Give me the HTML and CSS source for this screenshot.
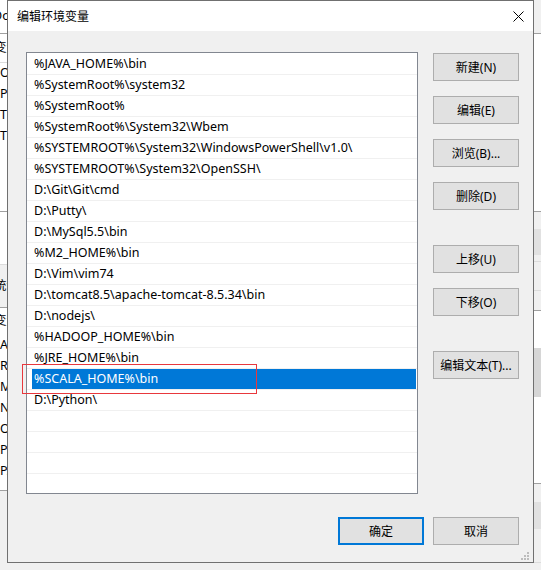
FILE: index.html
```html
<!DOCTYPE html>
<html lang="zh-CN">
<head>
<meta charset="utf-8">
<title>编辑环境变量</title>
<link rel="stylesheet" href="styles.css">
</head>
<body>
<div class="desktop">
  <div class="back back-left">
    <div class="b-row h33 white cut6">Do</div>
    <div class="b-line dark"></div>
    <div class="b-row h28 white cut5">变量</div>
    <div class="b-line light"></div>
    <div class="b-row h21 white">OneDrive</div>
    <div class="b-row h21 white">Path</div>
    <div class="b-row h21 white">TEMP</div>
    <div class="b-row h21 white">TMP</div>
    <div class="b-fill h64 white"></div>
    <div class="b-line dark"></div>
    <div class="b-fill h52 white"></div>
    <div class="b-line light"></div>
    <div class="b-row h42 cut5">统计</div>
    <div class="b-line dark"></div>
    <div class="b-row h27 white cut5">变量</div>
    <div class="b-row h21 white">ANDROID</div>
    <div class="b-row h21 white">REPO</div>
    <div class="b-row h21 white">M2_HOME</div>
    <div class="b-row h21 white">NUMBER</div>
    <div class="b-row h21 white">OS</div>
    <div class="b-row h21 white">Path</div>
    <div class="b-row h21 white">PATHEXT</div>
    <div class="b-fill h8 white"></div>
    <div class="b-line dark"></div>
  </div>
  <div class="back back-right">
    <div class="b-fill h33"></div>
    <div class="b-line dark"></div>
    <div class="b-fill h177 white"></div>
    <div class="b-line dark"></div>
    <div class="b-fill h17"></div>
    <div class="b-fill h26 block"></div>
    <div class="b-fill h6"></div>
    <div class="b-line light"></div>
    <div class="b-fill h28"></div>
    <div class="b-line light"></div>
    <div class="b-fill h19"></div>
    <div class="b-line dark"></div>
    <div class="b-fill h37 white"></div>
    <div class="b-fill h49 block2"></div>
    <div class="b-fill h86 white"></div>
    <div class="b-line dark"></div>
    <div class="b-fill h18"></div>
    <div class="b-fill h27 block"></div>
    <div class="b-fill h33"></div>
    <div class="b-line light"></div>
  </div>

  <div class="dialog">
    <div class="titlebar">
      <span class="title">编辑环境变量</span>
      <span class="close" aria-label="关闭">
        <svg width="11" height="11" viewBox="0 0 11 11"><path d="M0.5 0.5 L10.5 10.5 M10.5 0.5 L0.5 10.5" stroke="#000" stroke-width="1" fill="none"/></svg>
      </span>
    </div>
    <div class="body">
      <div class="main">
        <div class="list">
          <div class="row"><span class="item">%JAVA_HOME%\bin</span></div>
          <div class="row"><span class="item">%SystemRoot%\system32</span></div>
          <div class="row"><span class="item">%SystemRoot%</span></div>
          <div class="row"><span class="item">%SystemRoot%\System32\Wbem</span></div>
          <div class="row"><span class="item">%SYSTEMROOT%\System32\WindowsPowerShell\v1.0\</span></div>
          <div class="row"><span class="item">%SYSTEMROOT%\System32\OpenSSH\</span></div>
          <div class="row"><span class="item">D:\Git\Git\cmd</span></div>
          <div class="row"><span class="item">D:\Putty\</span></div>
          <div class="row"><span class="item">D:\MySql5.5\bin</span></div>
          <div class="row"><span class="item">%M2_HOME%\bin</span></div>
          <div class="row"><span class="item">D:\Vim\vim74</span></div>
          <div class="row"><span class="item">D:\tomcat8.5\apache-tomcat-8.5.34\bin</span></div>
          <div class="row"><span class="item">D:\nodejs\</span></div>
          <div class="row"><span class="item">%HADOOP_HOME%\bin</span></div>
          <div class="row"><span class="item">%JRE_HOME%\bin</span></div>
          <div class="row"><span class="item selected">%SCALA_HOME%\bin</span></div>
          <div class="row"><span class="item">D:\Python\</span></div>
          <div class="row"><span class="item"></span></div>
          <div class="row"><span class="item"></span></div>
          <div class="row"><span class="item"></span></div>
          <div class="row"><span class="item"></span></div>
        </div>
        <div class="side">
          <div class="btn">新建(N)</div>
          <div class="btn">编辑(E)</div>
          <div class="btn">浏览(B)...</div>
          <div class="btn">删除(D)</div>
          <div class="btn spaced">上移(U)</div>
          <div class="btn">下移(O)</div>
          <div class="btn spaced">编辑文本(T)...</div>
        </div>
      </div>
      <div class="footer">
        <div class="btn default">确定</div>
        <div class="btn">取消</div>
      </div>
    </div>
    <svg class="grip" width="8" height="8" viewBox="0 0 8 8">
      <rect x="6" y="0" width="2" height="2" fill="#bcbcbc"/>
      <rect x="3" y="3" width="2" height="2" fill="#bcbcbc"/>
      <rect x="6" y="3" width="2" height="2" fill="#bcbcbc"/>
      <rect x="0" y="6" width="2" height="2" fill="#bcbcbc"/>
      <rect x="3" y="6" width="2" height="2" fill="#bcbcbc"/>
      <rect x="6" y="6" width="2" height="2" fill="#bcbcbc"/>
    </svg>
    <div class="annot"></div>
  </div>
</div>
</body>
</html>
```
FILE: styles.css
```css
html, body {
  margin: 0;
  padding: 0;
}

body {
  width: 541px;
  height: 570px;
  overflow: hidden;
  background: #f0f0f0;
  font-family: "Noto Sans", "Noto Sans CJK SC", sans-serif;
  font-size: 12px;
  color: #000;
}

.desktop {
  position: relative;
  width: 541px;
  height: 570px;
  display: flex;
  justify-content: space-between;
}

/* background window fragments */
.back {
  width: 8px;
  display: flex;
  flex-direction: column;
  overflow: hidden;
}

.b-row {
  flex: none;
  white-space: nowrap;
  display: flex;
  align-items: center;
  line-height: 1;
  font-size: 12.5px;
}

.b-fill { flex: none; }

.white { background: #fff; }
.block { background: #e1e1e1; }
.block2 { background: #d6d6d6; }

.cut6 { text-indent: -7px; }
.cut5 { text-indent: -6px; }

.b-line { flex: none; height: 1px; }
.b-line.dark { background: #a0a0a0; }
.b-line.light { background: #dcdcdc; }

.h6 { height: 6px; }
.h8 { height: 8px; }
.h17 { height: 17px; }
.h18 { height: 18px; }
.h19 { height: 19px; }
.h21 { height: 21px; }
.h26 { height: 26px; }
.h27 { height: 27px; }
.h28 { height: 28px; }
.h33 { height: 33px; }
.h37 { height: 37px; }
.h42 { height: 42px; }
.h49 { height: 49px; }
.h52 { height: 52px; }
.h64 { height: 64px; }
.h86 { height: 86px; }
.h177 { height: 177px; }

/* dialog */
.dialog {
  position: absolute;
  left: 7px;
  top: 0;
  width: 527px;
  height: 563px;
  box-sizing: border-box;
  border: 1px solid #707070;
  background: #f0f0f0;
  display: flex;
  flex-direction: column;
}

.titlebar {
  flex: none;
  height: 30px;
  background: #fff;
  display: flex;
  align-items: center;
  justify-content: space-between;
  padding-left: 9px;
}

.title {
  font-family: "Noto Sans CJK SC", sans-serif;
  font-size: 12px;
  color: #000;
  position: relative;
  top: -1px;
}

.close {
  width: 30px;
  height: 30px;
  display: flex;
  align-items: center;
  justify-content: center;
}

.body {
  flex: 1;
  padding: 21px 14px 0 18px;
  display: flex;
  flex-direction: column;
}

.main {
  display: flex;
  gap: 15px;
  height: 442px;
}

.list {
  width: 392px;
  height: 442px;
  box-sizing: border-box;
  border: 1px solid #828790;
  background: #fff;
  overflow: hidden;
}

.row {
  height: 20px;
  border-top: 1px solid #f0f0f0;
  display: flex;
  padding-right: 1px;
}

.row:first-child {
  border-top-color: #fff;
}

.item {
  flex: 1;
  margin-left: 5px;
  padding-left: 2px;
  line-height: 20px;
  font-size: 12.5px;
  white-space: nowrap;
  color: #000;
}

.item.selected {
  background: #0078d7;
  color: #fff;
}

.side {
  width: 86px;
  padding-top: 1px;
  display: flex;
  flex-direction: column;
  gap: 15px;
}

.btn {
  flex: none;
  width: 86px;
  height: 28px;
  box-sizing: border-box;
  border: 1px solid #adadad;
  background: #e1e1e1;
  display: flex;
  align-items: center;
  justify-content: center;
  font-size: 12px;
  white-space: nowrap;
  color: #000;
}

.btn.spaced {
  margin-top: 20px;
}

.footer {
  margin-top: 23px;
  display: flex;
  justify-content: flex-end;
  gap: 9px;
}

.btn.default {
  border: 2px solid #0078d7;
}

.grip {
  position: absolute;
  right: 4px;
  bottom: 2px;
}

.annot {
  position: absolute;
  left: 14px;
  top: 363px;
  width: 233px;
  height: 28px;
  border: 1px solid #e8383d;
}
```
